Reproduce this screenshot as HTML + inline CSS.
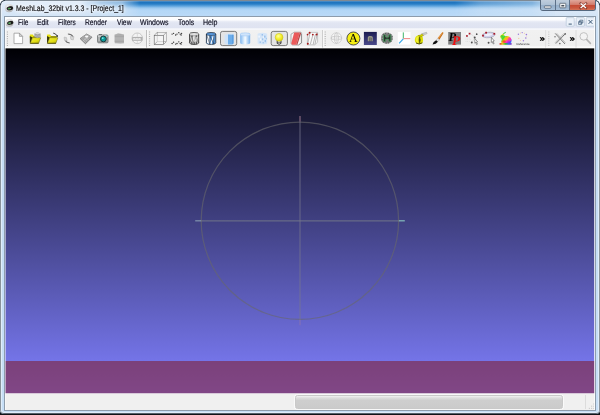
<!DOCTYPE html>
<html><head><meta charset="utf-8"><title>MeshLab_32bit v1.3.3 - [Project_1]</title>
<style>
html,body{margin:0;padding:0;width:600px;height:415px;overflow:hidden;background:#fff;}
body{font-family:"Liberation Sans",sans-serif;position:relative;text-rendering:geometricPrecision;}
.abs{position:absolute;}
#shadow{position:absolute;left:0;top:200px;width:600px;height:215px;background:#101418;}
#win{position:absolute;left:0;top:0;width:600px;height:414px;border-radius:5px 5px 4px 4px;
 background:linear-gradient(to bottom,#e3eefa 0,#dde9f7 8px,#d2e4f6 17px,#c6def6 60px,#c6def6 100%);overflow:hidden;}
#glow{position:absolute;left:80px;top:0;width:475px;height:17px;
 background:linear-gradient(to bottom,rgba(22,104,176,1) 0,rgba(28,114,188,1) 2px,rgba(40,126,198,1) 4px,rgba(88,160,220,.97) 6px,rgba(150,198,238,.95) 8px,rgba(176,213,246,.95) 10px,rgba(184,217,247,.9) 17px);
 -webkit-mask-image:linear-gradient(to right,transparent 0,rgba(0,0,0,.28) 22px,rgba(0,0,0,.42) 42px,#000 60px,#000 375px,rgba(0,0,0,.68) 400px,rgba(0,0,0,.5) 452px,rgba(0,0,0,.3) 462px,transparent 478px);mask-image:linear-gradient(to right,transparent 0,rgba(0,0,0,.28) 22px,rgba(0,0,0,.42) 42px,#000 60px,#000 375px,rgba(0,0,0,.68) 400px,rgba(0,0,0,.5) 452px,rgba(0,0,0,.3) 462px,transparent 478px);}
#edge{position:absolute;left:0;top:0;width:600px;height:414px;box-sizing:border-box;border:1px solid #8a939b;border-top-color:#7f8a94;border-bottom-color:#55606b;border-radius:5px 5px 4px 4px;}
#edge2{position:absolute;left:1px;top:1px;width:598px;height:412px;box-sizing:border-box;border:1px solid rgba(255,255,255,.45);border-top-color:rgba(255,255,255,.18);border-radius:4px 4px 3px 3px;}
#title{position:absolute;left:16.3px;top:-2.5px;height:22px;line-height:22px;font-size:16px;color:#0c0c0c;-webkit-text-stroke:.35px #1a1a22;white-space:nowrap;transform-origin:0 50%;transform:scale(.4344,.51);text-shadow:0 0 6px #fff,0 0 9px #fff,0 0 11px #fff;}
#cbtn{position:absolute;left:540px;top:0;width:55.5px;height:10.5px;border-radius:0 0 3px 3px;border:1px solid #55687e;border-top:none;box-sizing:border-box;overflow:hidden;background:#a9c1d9;}
#cbtn div{position:absolute;top:0;height:10px;}
#client{position:absolute;left:4px;top:16px;width:592px;height:395px;box-sizing:border-box;border:1px solid #8d9cac;background:#fff;overflow:hidden;}
#inner{position:absolute;left:0;top:0px;width:590px;height:393px;overflow:hidden;background:#f0f0f0;}
#lcol{position:absolute;left:0;top:0;width:1px;height:393px;background:rgba(255,255,255,.5);z-index:5;}
#rcol{position:absolute;left:589px;top:0;width:1px;height:393px;background:rgba(255,255,255,.78);z-index:5;}
#menubar{position:absolute;left:0;top:0;width:590px;height:13px;background:linear-gradient(to bottom,#ffffff 0,#fbfcfe 3px,#e9ecf6 4.5px,#e1e5f2 6px,#dfe3f1 11px,#f3f5fa 11.6px,#f6f7fb 13px);}
.mi{position:absolute;top:-5px;height:22px;line-height:22px;font-size:16px;color:#080818;-webkit-text-stroke:.3px #1a1a30;white-space:nowrap;transform-origin:0 50%;transform:scale(var(--sx),.51);}
#toolbar{position:absolute;left:0;top:13px;width:590px;height:19px;background:linear-gradient(to bottom,#f1f1f1 0,#efefef 15.5px,#fafafa 17px,#fdfdfd 18px,#fdfdfd 19px);}
#tbedge{position:absolute;left:0;top:31px;width:590px;height:1px;background:#5c5c5c;}
#stedge{position:absolute;left:0;top:376px;width:590px;height:1px;background:#d8c8da;z-index:3;}
#view{position:absolute;left:0;top:32px;width:590px;height:344px;background:linear-gradient(to bottom,#000004 0,#8080ff 100%);}
#band{position:absolute;left:0;top:312px;width:590px;height:32px;background:rgba(130,14,14,.5);}
#status{position:absolute;left:0;top:376px;width:590px;height:18px;background:#f0f0f0;}
#prog{position:absolute;left:289.9px;top:2px;width:268.5px;height:14px;box-sizing:border-box;border:1px solid #c9c9c9;border-radius:2.5px;background:linear-gradient(to bottom,#f2f2f2 0,#dcdcdc 2px,#cecece 4.5px,#cbcbcb 100%);box-shadow:0 0 0 .8px rgba(255,255,255,.8);}
</style></head><body>
<div id="shadow"></div>
<div id="win">
 <div id="glow"></div>
 <div id="edge"></div><div id="edge2"></div>
 <svg class="abs" style="left:0;top:0" width="600" height="6" viewBox="0 0 600 6"><g fill="none" stroke="#1e2e3a" stroke-width="1.1" stroke-linecap="round" opacity=".9"><path d="M.5,4.600 A4.300,4.300 0 0 1 4.600,.5"/><path d="M595.400,.5 A4.300,4.300 0 0 1 599.500,4.600"/></g></svg>
 <svg class="abs" style="left:4px;top:3px" width="11" height="11" viewBox="0 0 11 11">
  <defs><radialGradient id="gEye" cx=".4" cy=".3" r=".75"><stop offset="0" stop-color="#f4f4f4"/><stop offset=".6" stop-color="#d2d2d2"/><stop offset="1" stop-color="#a4a4a4"/></radialGradient></defs>
  <circle cx="5.05" cy="5.2" r="4.1" fill="url(#gEye)" opacity=".92"/>
  <ellipse cx="5.9" cy="5.3" rx="3.3" ry="2.05" fill="#2c2c2c" transform="rotate(-10 5.9 5.3)"/>
  <ellipse cx="6.9" cy="5" rx="2" ry="1.4" fill="#181818" transform="rotate(-10 6.9 5)"/>
  <ellipse cx="5.2" cy="5.55" rx="1.3" ry=".8" fill="#56a85c" transform="rotate(-14 5.2 5.55)"/>
  <circle cx="6.4" cy="5.3" r=".45" fill="#e8f0e8"/>
 </svg>
 <div id="title">MeshLab_32bit v1.3.3 - [Project_1]</div>
 <div id="cbtn">
  <div style="left:0;width:14.2px;background:linear-gradient(to bottom,#c0cedd 0,#afc2d6 4.5px,#94adc8 5px,#a6bed7 10px);border-right:1px solid #5d7088;"></div>
  <div style="left:15.2px;width:12.9px;background:linear-gradient(to bottom,#c0cedd 0,#afc2d6 4.5px,#94adc8 5px,#a6bed7 10px);border-right:1px solid #5d7088;"></div>
  <div style="left:29.1px;width:26px;background:linear-gradient(to bottom,#e0a79b 0,#d37d6d 4.5px,#c44a34 5px,#cb5840 8px,#d47458 10px);"></div>
  <svg class="abs" style="left:-1px;top:0" width="56" height="11" viewBox="540 0 56 11">
   <rect x="544.4" y="6" width="6.6" height="2.1" rx=".6" fill="#fff" stroke="#3e4c5c" stroke-width=".7"/>
   <rect x="559.8" y="3.3" width="6" height="4.5" rx=".5" fill="#fff" stroke="#3e4c5c" stroke-width=".7"/>
   <rect x="561.3" y="4.9" width="3" height="1.6" fill="#46505c"/>
   <path d="M580.6,3.4 L586,8 M586,3.4 L580.6,8" stroke="#5a221a" stroke-width="2.4" stroke-linecap="square" opacity=".55"/>
   <path d="M580.6,3.4 L586,8 M586,3.4 L580.6,8" stroke="#fff" stroke-width="1.3" stroke-linecap="butt"/>
  </svg>
 </div>
 <div id="client"><div id="inner"><div id="lcol"></div><div id="rcol"></div>
  <div id="menubar">
   <svg class="abs" style="left:0;top:0" width="12" height="13" viewBox="5 17 12 13">
    <circle cx="9.4" cy="22.8" r="4" fill="url(#gEye)" opacity=".92"/>
    <ellipse cx="10.2" cy="22.9" rx="3.2" ry="2" fill="#2c2c2c" transform="rotate(-10 10.2 22.9)"/>
    <ellipse cx="11.2" cy="22.6" rx="1.9" ry="1.35" fill="#181818" transform="rotate(-10 11.2 22.6)"/>
    <ellipse cx="9.5" cy="23.15" rx="1.3" ry=".8" fill="#56a85c" transform="rotate(-14 9.5 23.15)"/>
    <circle cx="10.7" cy="22.9" r=".45" fill="#e8f0e8"/>
   </svg>
   <span class="mi" style="left:12.7px;--sx:0.407">File</span>
   <span class="mi" style="left:32px;--sx:0.426">Edit</span>
   <span class="mi" style="left:53px;--sx:0.4075">Filters</span>
   <span class="mi" style="left:80px;--sx:0.419">Render</span>
   <span class="mi" style="left:111.5px;--sx:0.4215">View</span>
   <span class="mi" style="left:134.5px;--sx:0.439">Windows</span>
   <span class="mi" style="left:172.5px;--sx:0.435">Tools</span>
   <span class="mi" style="left:197.5px;--sx:0.44">Help</span>
   <svg class="abs" style="left:559px;top:0" width="33" height="13" viewBox="564 17 33 13">
    <g fill="#ebf1f9" stroke="#b4c6d9" stroke-width=".7">
     <rect x="566.2" y="17.6" width="8" height="8.6" rx=".8"/>
     <rect x="576.2" y="17.6" width="8.2" height="8.6" rx=".8"/>
     <rect x="586.2" y="17.6" width="8.6" height="8.6" rx=".8"/>
    </g>
    <path d="M568.6,24.1 h3.2" stroke="#3b5876" stroke-width="1"/>
    <g fill="none" stroke="#3b5876" stroke-width=".7">
     <path d="M579.8,20.2 h3 v2.8 h-3 z M578.6,21.6 h3 v2.8 h-3 z" fill="#e6eef8"/>
    </g>
    <path d="M588.6,20 l3.8,3.8 M592.4,20 l-3.8,3.8" stroke="#3b5876" stroke-width="1"/>
   </svg>
  </div>
  <div id="toolbar">
   <svg class="abs" style="left:0;top:0;will-change:transform" width="592" height="19" viewBox="5 30 592 19">
<defs>
 <linearGradient id="gFold" x1="0" y1="0" x2="1" y2="1"><stop offset="0" stop-color="#f4f038"/><stop offset=".6" stop-color="#e0dc12"/><stop offset="1" stop-color="#a39f10"/></linearGradient>
 <linearGradient id="gCylB" x1="0" y1="0" x2="1" y2="0"><stop offset="0" stop-color="#7fb5ee"/><stop offset=".22" stop-color="#b4d6f8"/><stop offset=".5" stop-color="#f8fcff"/><stop offset=".8" stop-color="#a8cef5"/><stop offset="1" stop-color="#78b0ea"/></linearGradient>
 <linearGradient id="gNavy" x1="0" y1="0" x2="0" y2="1"><stop offset="0" stop-color="#1c1c50"/><stop offset="1" stop-color="#4a4a8a"/></linearGradient>
 <linearGradient id="gRain" x1="0" y1="0" x2="1" y2="1"><stop offset="0" stop-color="#ff2020"/><stop offset=".2" stop-color="#ffe000"/><stop offset=".4" stop-color="#30e030"/><stop offset=".55" stop-color="#ffd000"/><stop offset=".72" stop-color="#ff30c0"/><stop offset=".88" stop-color="#6040ff"/><stop offset="1" stop-color="#20c0ff"/></linearGradient>
 <linearGradient id="gRainH" x1="0" y1="0" x2="1" y2="0"><stop offset="0" stop-color="#e02020"/><stop offset=".25" stop-color="#e0c000"/><stop offset=".5" stop-color="#20b020"/><stop offset=".75" stop-color="#2060e0"/><stop offset="1" stop-color="#8020c0"/></linearGradient>
 <radialGradient id="gBulb" cx=".4" cy=".35" r=".7"><stop offset="0" stop-color="#ffffa0"/><stop offset=".5" stop-color="#f7f230"/><stop offset="1" stop-color="#d8d018"/></radialGradient>
</defs>
<!-- handles / separators -->
<g stroke="#a8a8a8" stroke-width="1" stroke-dasharray="1 1.25">
 <line x1="7.4" y1="31.5" x2="7.4" y2="46.5"/><line x1="149.6" y1="31.5" x2="149.6" y2="46.5"/><line x1="325.2" y1="31.5" x2="325.2" y2="46.5"/><line x1="548.8" y1="31.5" x2="548.8" y2="46.5" stroke="#c0c0c0"/>
</g>
<g stroke-width="1">
 <line x1="146.5" y1="30" x2="146.5" y2="47.6" stroke="#bdbdbd"/><line x1="147.5" y1="30" x2="147.5" y2="47.6" stroke="#f8f8f8"/>
 <line x1="322.5" y1="30" x2="322.5" y2="47.6" stroke="#cecece"/><line x1="323.5" y1="30" x2="323.5" y2="47.6" stroke="#f8f8f8"/>
 <line x1="545.6" y1="30" x2="545.6" y2="47.6" stroke="#e0e0e0"/><line x1="576" y1="30" x2="576" y2="47.6" stroke="#dcdcdc"/>
</g>
<!-- new doc -->
<path d="M14,33.2 h5.4 l3.2,3.2 v7.2 h-8.6 z" fill="#fff" stroke="#9b9b9b" stroke-width=".8"/>
<path d="M19.4,33.2 v3.2 h3.2 z" fill="#d9d9d9" stroke="#8a8a8a" stroke-width=".6"/>
<!-- folder + layers -->
<g>
 <path d="M29.8,34.9 q0,-.5 .5,-.5 h2.5 l1.100,1.500 h5.400 v2 h-9.500 z" fill="#e6e010"/>
 <path d="M29.8,36 l2.800,1.600 l-2.200,5.700 h-.6 z" fill="#3e3c06"/>
 <path d="M32.4,37.500 h7 v-1.300 h-5.600 z" fill="#6a680c" opacity=".8"/>
 <path d="M30.2,43.4 l2.300,-5.700 h8.200 l-2.100,5.700 z" fill="url(#gFold)" stroke="#5a580a" stroke-width=".45"/>
 <path d="M30.3,43.3 h8.300" stroke="#3a3806" stroke-width=".7"/>
</g>
<g>
 <path d="M34.4,33.600 l3,-1.400 l3.200,1.200 v3.600 l-3.100,.9 l-3.100,-1 z" fill="#9a9a9a"/>
 <path d="M34.4,33.600 l3,-1.400 l3.200,1.200 l-3.100,1.100 z" fill="#d8d8d8"/>
 <path d="M34.4,35 l3.100,.9 l3.100,-.9 M34.400,36.200 l3.100,.9 l3.100,-.9" stroke="#c4c4c4" stroke-width=".5" fill="none"/>
</g>
<!-- folder + arrow -->
<g transform="translate(17.2,0)">
 <path d="M29.8,34.9 q0,-.5 .5,-.5 h2.5 l1.100,1.500 h5.400 v2 h-9.500 z" fill="#e6e010"/>
 <path d="M29.8,36 l2.800,1.600 l-2.200,5.700 h-.6 z" fill="#3e3c06"/>
 <path d="M32.4,37.500 h7 v-1.300 h-5.600 z" fill="#6a680c" opacity=".8"/>
 <path d="M30.2,43.4 l2.300,-5.700 h8.200 l-2.100,5.700 z" fill="url(#gFold)" stroke="#5a580a" stroke-width=".45"/>
 <path d="M30.3,43.3 h8.300" stroke="#3a3806" stroke-width=".7"/>
</g>
<path d="M53.2,33.100 q2.800,.4 3.800,2.800" fill="none" stroke="#1c1c1c" stroke-width=".8"/><path d="M56,36.200 l1.800,.9 l.2,-2.200 z" fill="#1c1c1c"/>
<!-- reload (disabled) -->
<path d="M67.900,34.100 Q71.600,34.200 73.100,36.800" fill="none" stroke="#6e6e6e" stroke-width="1.050"/>
<path d="M70.300,36.500 l3.600,.2 l-.6,3.200 l-2.400,-.5 z" fill="#d6d6d6" stroke="#a8a8a8" stroke-width=".45"/>
<path d="M64.100,37.100 l2.400,.5 l.6,3.300 l-2.600,-.4 z" fill="#d6d6d6" stroke="#a8a8a8" stroke-width=".45"/>
<path d="M65.500,40.700 Q66.400,42.600 69.700,42.900" fill="none" stroke="#6e6e6e" stroke-width="1.050"/>
<!-- export (disabled diskette) -->
<path d="M80.100,38.600 L86.700,34 L92,37.200 L85.500,43.800 z" fill="#a2a2a2" stroke="#5e5e5e" stroke-width=".7"/>
<path d="M80.600,38.600 L86.700,34.400 L91.400,37.200" fill="none" stroke="#c8c8c8" stroke-width=".5"/>
<ellipse cx="86.700" cy="36.600" rx="1.700" ry="1.100" fill="#fafafa"/>
<path d="M82.600,39.800 L85.600,42.600 M84.300,38.700 L87.300,41.400 M86.200,37.800 l2.800,2.400" stroke="#d4d4d4" stroke-width=".5"/>
<path d="M83.400,40.600 l3.800,-3.200" stroke="#dcdcdc" stroke-width=".45"/>
<!-- camera -->
<rect x="97.600" y="35" width="10.400" height="7.800" rx="1" fill="#b2b6b6" stroke="#505454" stroke-width=".7"/>
<rect x="99" y="34" width="3" height="1.400" fill="#6c7070"/>
<rect x="98" y="35.400" width="9.600" height="1.300" fill="#d8dada"/>
<rect x="98" y="41.200" width="9.600" height="1.200" fill="#8e9292"/>
<circle cx="103.400" cy="38.900" r="2.900" fill="#0a9c9c" stroke="#1c3838" stroke-width="1"/>
<circle cx="102.700" cy="38.200" r=".9" fill="#7fe0e0"/>
<rect x="106.200" y="35.400" width="1.200" height=".9" fill="#28b0b0"/>
<!-- layers (disabled) -->
<path d="M114.600,34.600 l3.600,-1.200 l5.800,.8 v8.600 l-3.400,.9 l-6,-1 z" fill="#d2d2d2"/>
<g stroke="#868686" stroke-width=".6"><path d="M114.600,35.300 h9.400 M114.600,36.550 h9.400 M114.600,37.800 h9.400 M114.600,39.050 h9.400 M114.600,40.300 h9.400 M114.600,41.550 h9.400 M114.800,42.800 h9.200" fill="none"/></g>
<path d="M114.600,34.600 l3.600,-1.200 l5.800,.8 l-3.600,.9 z" fill="#aaa"/>
<!-- globe disabled -->
<circle cx="137.300" cy="38.300" r="5.300" fill="#f4f4f4" stroke="#bcbcbc" stroke-width=".8"/>
<path d="M132.200,36.900 h10.200 v3.900 h-10.200 z" fill="#b0b0b0"/>
<path d="M133,38.400 q1.300,-1 2.600,0 q1.300,-1 2.600,0 q1.300,-1 2.600,0 v1.300 h-7.800 z" fill="#ededed"/>
<path d="M137.300,33 v3.800 M137.300,40.900 v2.700" stroke="#c8c8c8" stroke-width=".6"/>
<!-- bbox cube -->
<g fill="none" stroke="#5a5a5a" stroke-width=".58">
 <rect x="157.200" y="32.500" width="9.100" height="9.200" stroke="#858585" stroke-width=".5"/>
 <rect x="154.200" y="35.300" width="9.200" height="9.300" fill="rgba(246,246,246,.7)"/>
 <path d="M154.200,35.300 l3,-2.800 M163.400,35.300 l2.900,-2.800 M163.400,44.600 l2.900,-2.900 M154.200,44.600 l3,-2.900" stroke-width=".52" stroke="#6a6a6a"/>
 <path d="M157.200,35.300 v6.400 h6.200" stroke="#bcbcbc" stroke-width=".4"/>
</g>
<!-- points -->
<g fill="#242424"><circle cx="172.1" cy="34.1" r=".66"/><circle cx="173.6" cy="33.3" r=".66"/><circle cx="175.7" cy="35.0" r=".66"/><circle cx="177.0" cy="34.1" r=".66"/><circle cx="178.8" cy="32.7" r=".66"/><circle cx="180.2" cy="34.1" r=".66"/><circle cx="181.6" cy="33.3" r=".66"/><circle cx="181.1" cy="35.0" r=".66"/><circle cx="172.1" cy="43.5" r=".66"/><circle cx="173.6" cy="42.2" r=".66"/><circle cx="175.7" cy="44.1" r=".66"/><circle cx="177.0" cy="43.5" r=".66"/><circle cx="178.8" cy="41.8" r=".66"/><circle cx="180.2" cy="43.5" r=".66"/><circle cx="181.6" cy="42.6" r=".66"/><circle cx="181.1" cy="44.1" r=".66"/></g>
<!-- wire cylinder -->
<g fill="none" stroke="#2e2e2e" stroke-width=".8">
 <path d="M189.500,34 v8.800 a4.600,1.700 0 0 0 9.200,0 v-8.800" fill="#cdcdcd"/>
 <ellipse cx="194.100" cy="34" rx="4.600" ry="1.500" fill="#e4e4e4" stroke="none"/><path d="M189.500,34 a4.600,1.500 0 0 1 9.200,0" stroke-width=".75"/><path d="M189.500,34 a4.600,1.500 0 0 0 9.200,0" stroke="#8a8a8a" stroke-width=".45"/>
 <path d="M189.600,34.400 l2.400,9.800 M192,35.600 l-2.300,7.400 M192,35.600 l2.200,8.800 M196.300,35.600 l-2.100,8.800 M196.300,35.600 l2.300,7.400 M198.600,34.400 l-2.400,9.800 M192,35.600 v8.600 M196.300,35.600 v8.600" stroke-width=".62" stroke="#3a3a3a"/>
 <path d="M190.700,36.600 l.9,5 M193,36.800 l1.100,5 M195.200,41.800 l1.100,-5 M197.500,36.600 l-.8,5" stroke="#fff" stroke-width=".75"/>
</g>
<!-- hidden-line cylinder -->
<g stroke="#1c2430" stroke-width=".75">
 <path d="M206.400,34 v8.800 a4.700,1.700 0 0 0 9.400,0 v-8.800 a4.700,1.500 0 0 0 -9.400,0 z" fill="#5a9ade"/>
 <path d="M207,35 l2.600,.7 v8.400 l-2.600,-1.100 z" fill="#f2f8ff" stroke="none"/>
 <path d="M213.400,35.600 l-2.600,8.600" stroke="#f2f8ff" stroke-width="1.300"/>
 <path d="M209.800,35.800 v8.600 M213.800,35.500 v8.400 M209.800,35.800 l4,8 M206.500,34.300 l3.300,9.800" fill="none" stroke-width=".5"/>
 <path d="M206.400,34 a4.700,1.500 0 0 0 9.400,0" fill="none" stroke-width=".5"/>
</g>
<!-- pressed: flat lines -->
<rect x="220.5" y="31.4" width="16.2" height="14.2" rx="2" fill="#e4e4e4" stroke="#666" stroke-width=".85"/>
<path d="M224.6,35 l4,-1.4 h5 v9.2 l-1.4,1.6 h-5 l-2.6,-.8 z" fill="#cfe3f8"/>
<path d="M228,34.6 l5.4,.1 v8.6 l-1.3,1.2 h-4.1 z" fill="#6cadea"/>
<path d="M232.300,34.7 h1.2 v8.700 l-1.200,1 z" fill="#5598dc"/>
<!-- flat cylinder -->
<path d="M240.2,34.4 v8.4 a5,1.7 0 0 0 10,0 v-8.4 a5,1.7 0 0 0 -10,0 z" fill="url(#gCylB)"/>
<ellipse cx="245.2" cy="34.4" rx="5" ry="1.6" fill="#cfe4fb" stroke="#8cbcf0" stroke-width=".4"/>
<!-- smooth -->
<path d="M257.6,34.4 v8.4 a4.8,1.7 0 0 0 9.6,0 v-8.4 a4.8,1.7 0 0 0 -9.6,0 z" fill="#d4e5f8"/>
<g fill="#9cc2ec"><rect x="261.6" y="34" width="1.4" height="1.6"/><rect x="264" y="35.6" width="1.6" height="2"/><rect x="262" y="38.4" width="1.2" height="1.8"/><rect x="264.6" y="40" width="1.4" height="2.2"/><rect x="259.6" y="41.4" width="1.2" height="1.6"/><rect x="262.6" y="42" width="1.2" height="1.4"/><rect x="265.8" y="37.8" width="1" height="1.6"/></g>
<g fill="#f4f9ff"><rect x="258.4" y="35.6" width="1.4" height="2"/><rect x="260" y="38.6" width="1.2" height="1.8"/><rect x="263.2" y="36.4" width=".8" height="1.4"/></g>
<!-- pressed: light -->
<rect x="271.200" y="31.400" width="16.200" height="14.200" rx="2" fill="#e4e4e4" stroke="#666" stroke-width=".85"/>
<path d="M277.200,40.400 h3.800 v3 q-1.900,1.700 -3.800,0 z" fill="#e8e8e8" stroke="#2a2a2a" stroke-width=".9"/>
<path d="M277.200,42.300 h3.800" stroke="#2a2a2a" stroke-width=".6"/>
<circle cx="279.100" cy="37.300" r="3.900" fill="url(#gBulb)" stroke="#c2ba18" stroke-width=".5"/>
<!-- double side lighting (red) -->
<path d="M291,34.2 l3.4,-2 h6.6 l.6,1.2 v9.4 l-3,2.2 h-6.4 l-1.2,-1.6 z" fill="#f6f6f6" stroke="#8e8e8e" stroke-width=".7"/>
<path d="M294.2,32.4 h5.6 l-3.6,12.4 h-4 l-1,-1.4 z" fill="#ea5a5a"/>
<path d="M299.8,32.4 l1.4,.6 l-3.8,11.8 h-1.2 z" fill="#b84646"/>
<path d="M301.4,34 v9 l-2.8,1.8" fill="none" stroke="#777" stroke-width=".6"/>
<!-- fancy lighting (red dots cube) -->
<path d="M307.4,34.2 l2.6,-1.8 h7.6 v9.6 l-2.6,2.8 h-7.6 z" fill="#fafafa" stroke="#a4a4a4" stroke-width=".6"/>
<path d="M310,32.6 l-2.4,11.8 M313,34.4 l-2.6,9.8 M315.4,34.4 l-2.2,10 M317.4,33 l-2.4,11" stroke="#8a8a8a" stroke-width=".6" fill="none"/>
<g fill="#a81c1c"><circle cx="309.6" cy="32.8" r="1"/><circle cx="307.6" cy="34.6" r=".9"/><circle cx="312.8" cy="34.6" r=".9"/><circle cx="316.6" cy="34.4" r="1"/><circle cx="307.8" cy="43.8" r="1"/></g>
<!-- trackball globe -->
<g fill="none" stroke="#bcbcbc" stroke-width=".65">
 <circle cx="336.4" cy="38.1" r="5.3" fill="#fafafa"/>
 <ellipse cx="336.4" cy="38.1" rx="5.3" ry="2"/><ellipse cx="336.4" cy="38.1" rx="2" ry="5.3"/>
 <path d="M331.1,38.1 h10.6 M336.4,32.8 v10.6" stroke="#c8c8c8" stroke-width=".5"/>
</g>
<!-- yellow A -->
<circle cx="353.4" cy="38.5" r="6.5" fill="#f6ef14" stroke="#2c2c3c" stroke-width=".8"/>
<text x="353.4" y="42.100" font-family="Liberation Serif,serif" font-size="12" text-anchor="middle" fill="#000" stroke="#000" stroke-width=".08">A</text>
<!-- navy square -->
<rect x="363.900" y="31.900" width="12.900" height="13.100" fill="url(#gNavy)"/>
<path d="M367.800,41.200 v-3.800 q0,-1.500 1.800,-1.500 h1.400 q1.800,0 1.800,1.500 v3.800 h-1.300 v-3.400 h-2.400 v3.400 z" fill="#9c9c88"/>
<path d="M369.100,37.800 h2.400 v3.400 h-2.400 z" fill="#6e6e66"/>
<path d="M370.300,36 v5.200" stroke="#8a8a7a" stroke-width=".5"/>
<!-- mesh blob w/ green -->
<path d="M381.200,37 q.4,-3.600 4.400,-4.400 q4.600,-.6 6.600,2.400 q1.400,3.200 -.4,6.400 q-2.400,2.600 -6.200,2.200 q-4,-.6 -4.400,-4 z" fill="#7a7a7a"/>
<g fill="#b4b4b4"><rect x="382.400" y="35" width=".8" height=".8"/><rect x="384" y="33.400" width=".8" height=".8"/><rect x="386.400" y="32.900" width=".8" height=".8"/><rect x="389" y="33.200" width=".8" height=".8"/><rect x="391.200" y="34.800" width=".8" height=".8"/><rect x="392" y="37.400" width=".8" height=".8"/><rect x="391.400" y="40" width=".8" height=".8"/><rect x="389.600" y="42" width=".8" height=".8"/><rect x="387" y="42.800" width=".8" height=".8"/><rect x="384.400" y="42.400" width=".8" height=".8"/><rect x="382.400" y="40.600" width=".8" height=".8"/><rect x="381.800" y="38" width=".8" height=".8"/><rect x="386.800" y="37.800" width=".8" height=".8"/></g>
<g fill="#4a4a4a"><rect x="383.200" y="34.200" width=".8" height=".8"/><rect x="385.400" y="33" width=".8" height=".8"/><rect x="388" y="32.800" width=".8" height=".8"/><rect x="390.400" y="34" width=".8" height=".8"/><rect x="391.800" y="36.200" width=".8" height=".8"/><rect x="391.800" y="38.800" width=".8" height=".8"/><rect x="390.400" y="41.200" width=".8" height=".8"/><rect x="388.200" y="42.600" width=".8" height=".8"/><rect x="385.600" y="42.800" width=".8" height=".8"/><rect x="383.200" y="41.600" width=".8" height=".8"/><rect x="381.800" y="39.400" width=".8" height=".8"/></g>
<path d="M383.600,35.200 q1,-.8 2,0 v1.800 q1.600,.6 3.200,0 v-1.800 q1,-.8 2,0 v6 q-1,.8 -2,0 v-1.800 q-1.600,-.6 -3.200,0 v1.800 q-1,.8 -2,0 z" fill="#2a2e2a" stroke="#44a45e" stroke-width=".75"/>
<!-- axes -->
<rect x="397.8" y="32" width="12.7" height="12.6" fill="#fff"/>
<path d="M403.3,32.4 v6.2" stroke="#3fb36a" stroke-width="1"/>
<path d="M403.3,38.6 h7" stroke="#f08c8c" stroke-width="1.1"/>
<path d="M403.3,38.8 l-4.2,4.6" stroke="#38a8e8" stroke-width="1.2"/>
<!-- yellow teapot/bucket -->
<path d="M414.800,40 q0,-4 4,-5 q3,-.4 4,2.600 q.8,3.600 -.6,5.600 q-1.600,1.400 -4.400,.9 q-3,-.9 -3,-4.100 z" fill="#dcdc04"/>
<path d="M415.600,38.600 q1.200,-2.400 3.200,-2.600 q-1,3.400 -.4,7.400 q-2.800,-1 -2.800,-4.800 z" fill="#f0f030"/>
<path d="M419.500,36.600 q1.700,3.200 .1,6.900 q-1,-3.400 -.1,-6.900 z" fill="#4a4a04" stroke="#4a4a04" stroke-width=".5"/>
<path d="M416,43 q3.200,2 6.400,-.2" stroke="#2a2a08" stroke-width=".8" fill="none"/>
<path d="M418.400,35.600 q2.200,-.2 3.600,-1.900 l1.700,1.500 q-1.700,1.800 -3.900,1.700 z" fill="#d4d400" stroke="#5a5a08" stroke-width=".35"/>
<path d="M422.200,33.600 l4.300,-1.300 l.6,1.300 l-3.500,1.500 z" fill="#d0d0d0" stroke="#8a8a8a" stroke-width=".4"/>
<!-- brush -->
<path d="M443.500,32.900 q-.3,-.9 -1.200,-.6 l-4.600,6 l1.700,1.500 z" fill="#c46c18"/>
<path d="M442.300,32.300 l-4.600,6 l.7,.6 l4.500,-6.200 z" fill="#e8a050"/>
<path d="M437.700,38.300 l1.700,1.500 l-1.500,1.900 l-1.800,-1.500 z" fill="#e4e4e4" stroke="#8a8a8a" stroke-width=".35"/>
<path d="M436.100,40.200 l1.800,1.500 q-1.600,2.400 -5.400,2.800 q.6,-2.800 3.600,-4.300 z" fill="#101010"/>
<!-- PP -->
<rect x="448.200" y="32" width="12.800" height="12.600" fill="#808080"/>
<text x="448.600" y="40.600" font-family="Liberation Serif,serif" font-weight="bold" font-style="italic" font-size="12.400" fill="#000">P</text>
<text x="452" y="44.900" font-family="Liberation Serif,serif" font-weight="bold" font-style="italic" font-size="13.400" fill="#f01010">P</text>
<!-- pick points -->
<circle cx="467.200" cy="33.500" r="1.100" fill="#fff"/>
<g fill="#d2d2d2"><circle cx="466" cy="38" r=".45"/><circle cx="467.600" cy="38" r=".45"/><circle cx="469.200" cy="38" r=".45"/><circle cx="466" cy="39.600" r=".45"/><circle cx="467.600" cy="39.600" r=".45"/><circle cx="469.200" cy="39.600" r=".45"/><circle cx="466" cy="41.200" r=".45"/><circle cx="467.600" cy="41.200" r=".45"/><circle cx="469.200" cy="41.200" r=".45"/><circle cx="470.800" cy="39.600" r=".45"/></g>
<path d="M470.200,33.400 l4.600,4 l-2.800,4.800" fill="none" stroke="#d0d0d0" stroke-width=".5"/>
<g fill="#a81c2a"><rect x="468.700" y="32.800" width="1.700" height="1.700"/><rect x="466.100" y="35.100" width="1.700" height="1.700"/></g>
<g fill="#4e4e4e"><circle cx="476.700" cy="34.200" r=".85"/><circle cx="474.700" cy="37.400" r="1"/><circle cx="471.800" cy="42.500" r=".95"/></g>
<path d="M474.900,38.600 l2.700,3.200 l-1.200,.2 l1,2.200 l-.8,.4 l-1,-2.200 l-.8,.8 z" fill="#fff" stroke="#3a3a3a" stroke-width=".5"/>
<!-- ellipse select -->
<ellipse cx="488.700" cy="35" rx="6.300" ry="2.700" fill="#d2d2ec" stroke="#9494a8" stroke-width=".55" transform="rotate(-6 488.700 35)"/>
<ellipse cx="488.400" cy="34.700" rx="3.800" ry="1.200" fill="#f0f0fa" transform="rotate(-6 488.400 34.700)"/>
<g fill="#a81c2a"><rect x="485.200" y="31.800" width="1.800" height="1.800"/><rect x="482.100" y="34.700" width="1.800" height="1.800"/><rect x="493.400" y="32.900" width="1.800" height="1.800"/></g>
<path d="M491.400,37.400 l2.900,3.600 l-1.300,.2 l1.100,2.400 l-.8,.4 l-1.200,-2.400 l-.8,.9 z" fill="#fff" stroke="#3a3a3a" stroke-width=".5"/>
<circle cx="488.600" cy="42.800" r=".95" fill="#4e4e4e"/>
<!-- rainbow bunny -->
<path d="M500.300,36.700 q.1,-1.700 1.800,-2.100 q1.200,-2 3.400,-2.500 q1,-.1 .4,.7 q-1.800,.9 -2.400,2.200 q1.200,.3 1.600,1.300 q3.800,-.8 5.600,1.500 q1.400,1.900 .6,4.600 l-.4,.6 h-9.200 q-.9,-.7 -.5,-1.800 q.9,-1.300 .5,-2.400 q-1.600,-.5 -1.400,-2.100 z" fill="url(#gRain)"/>
<circle cx="502" cy="36.200" r="1.300" fill="#40d040" opacity=".85"/>
<path d="M503,34.200 q1.200,-1.700 2.800,-1.900" stroke="#28c0c0" stroke-width=".8" fill="none"/>
<ellipse cx="506.200" cy="38.400" rx="1.800" ry="1.300" fill="#ffb020" opacity=".8"/>
<ellipse cx="509.600" cy="39.600" rx="1.600" ry="1.800" fill="#ff40a0" opacity=".7"/>
<ellipse cx="504" cy="41.400" rx="1.600" ry="1.200" fill="#f03030" opacity=".75"/>
<rect x="499.600" y="43.100" width="12" height="1.600" fill="url(#gRainH)"/>
<!-- reference -->
<g fill="#9a7ad8"><circle cx="518.400" cy="34.200" r=".7"/><circle cx="522.200" cy="32.600" r=".7"/><circle cx="526.400" cy="34.600" r=".8"/><circle cx="525.800" cy="38" r=".8"/><circle cx="523.400" cy="40.800" r=".7"/></g>
<g fill="#f0c49c"><circle cx="520.400" cy="33" r=".5"/><circle cx="524.400" cy="33.200" r=".5"/><circle cx="518.800" cy="38.400" r=".6"/><circle cx="520.400" cy="40.400" r=".5"/><circle cx="526.800" cy="36.400" r=".4"/></g>
<text transform="translate(516.400,44.600) scale(.36)" font-family="Liberation Sans,sans-serif" font-size="8" fill="#2a2a2a">Reference</text>
<!-- chevrons -->
<text transform="translate(539.700,40.750) scale(.54,.44)" font-family="Liberation Sans,sans-serif" font-size="17" fill="#000" stroke="#000" stroke-width=".9">»</text>
<text transform="translate(569.800,40.750) scale(.54,.44)" font-family="Liberation Sans,sans-serif" font-size="17" fill="#000" stroke="#000" stroke-width=".9">»</text>
<!-- crossed tools -->
<g stroke="#5e5e5e" stroke-width=".8" fill="none"><path d="M555.200,33.400 l9.800,10.600 M565.400,33.600 l-9.600,10"/></g>
<g stroke="#9a9a9a" stroke-width=".6" fill="none"><path d="M556.600,33.200 l8.800,9.600 M564,33.400 l-9,9.400"/></g>
<g fill="#6e6e6e"><circle cx="565.200" cy="33.900" r=".9"/><circle cx="555" cy="36.800" r=".75"/><circle cx="559.800" cy="43.500" r=".85"/><circle cx="563.600" cy="35.600" r=".5"/></g>
<!-- magnifier -->
<circle cx="583.750" cy="36.400" r="3.800" fill="#f3f3f3" stroke="#c0c0c0" stroke-width="1"/>
<path d="M586.800,39.600 l3.600,3.800" stroke="#b4b4b4" stroke-width="1.600" stroke-linecap="round"/>

   </svg>
  </div>
  <div id="tbedge"></div><div id="stedge"></div>
  <div id="view">
   <svg class="abs" style="left:0;top:0" width="590" height="344" viewBox="5 49 590 344">
    <g fill="none" stroke="rgba(104,104,108,.62)" stroke-width="1.25">
     <circle cx="299.9" cy="220.7" r="98.7"/>
    </g>
    <g fill="none" stroke="rgba(120,120,142,.55)" stroke-width="1.35">
     <line x1="201" y1="220.8" x2="399" y2="220.8" stroke="rgba(132,138,142,.58)"/>
     <line x1="300" y1="121.5" x2="300" y2="319.8"/>
    </g>
    <g stroke-width="1.3"><line x1="300" y1="116" x2="300" y2="121.5" stroke="rgba(170,130,150,.7)"/><line x1="300" y1="319.8" x2="300" y2="325.3" stroke="rgba(150,120,170,.55)"/><line x1="195.2" y1="220.8" x2="201" y2="220.8" stroke="rgba(150,175,190,.7)"/><line x1="399" y1="220.8" x2="404.8" y2="220.8" stroke="rgba(140,200,195,.85)"/></g>
   </svg>
   <div id="band"></div>
  </div>
  <div id="status"><div id="prog"></div>
   <div class="abs" style="left:580.3px;top:2px;width:1px;height:14px;background:#dcdcdc"></div>
   <svg class="abs" style="left:582px;top:8px" width="9" height="9" viewBox="0 0 9 9"><g fill="#cfcfcf"><rect x="6.2" y="2.4" width="1.2" height="1.2"/><rect x="6.2" y="4.6" width="1.2" height="1.2"/><rect x="4" y="4.6" width="1.2" height="1.2"/><rect x="6.2" y="6.8" width="1.2" height="1.2"/><rect x="4" y="6.8" width="1.2" height="1.2"/><rect x="1.8" y="6.8" width="1.2" height="1.2"/></g></svg>
  </div>
 </div></div>
</div>
</body></html>
